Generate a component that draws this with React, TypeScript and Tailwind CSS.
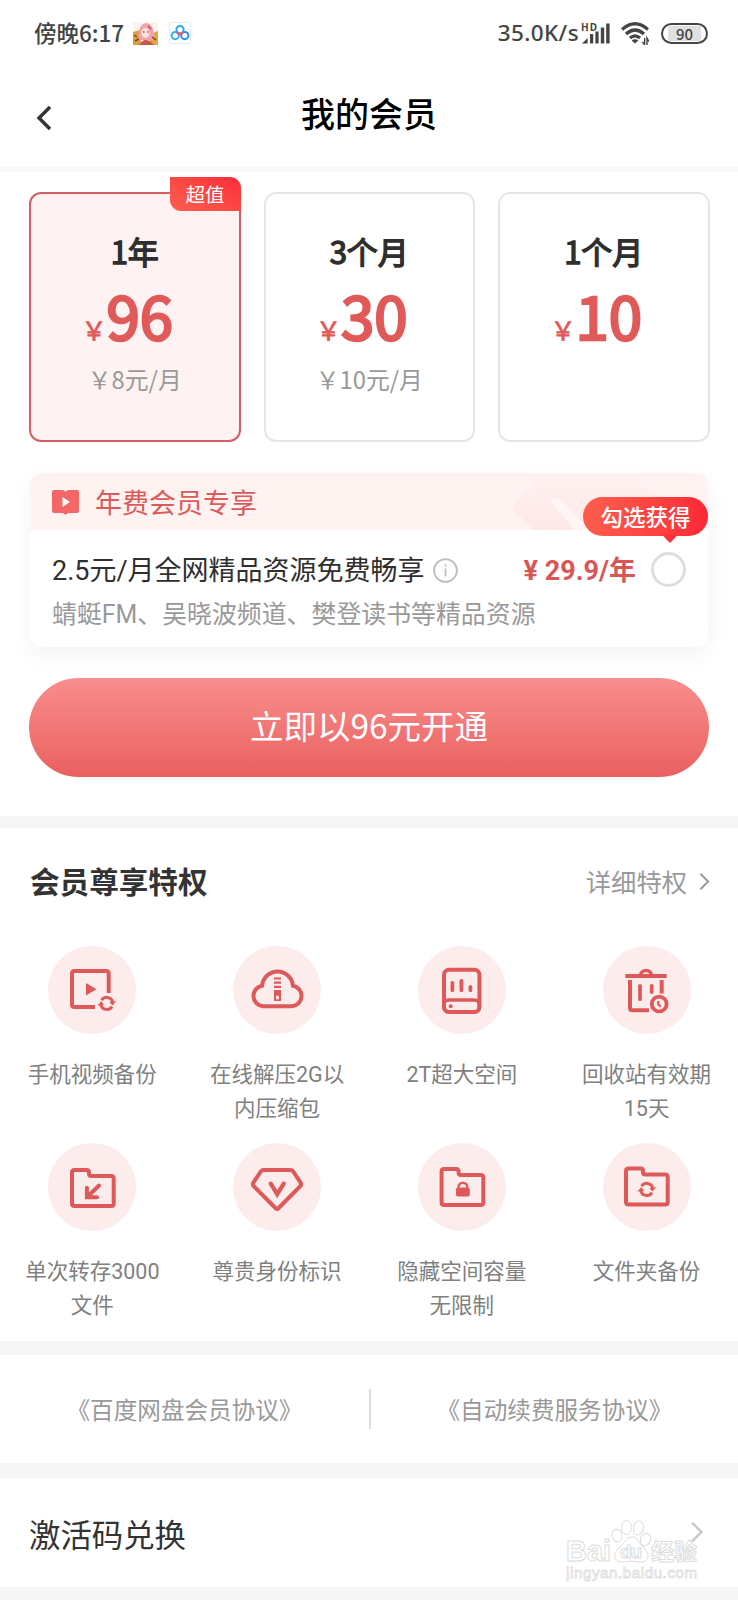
import React, { useState } from 'react';

type Plan = {
  id: string;
  title: string;
  price: string;
  monthly?: string;
  badge?: string;
};

const plans: Plan[] = [
  { id: 'year', title: '1年', price: '96', monthly: '￥8元/月', badge: '超值' },
  { id: 'quarter', title: '3个月', price: '30', monthly: '￥10元/月' },
  { id: 'month', title: '1个月', price: '10' },
];

const SyncMark: React.FC<{ x: number; y: number }> = ({ x, y }) => (
  <g transform={`translate(${x} ${y})`}>
    <path d="M-5.2 -3.2 A6.1 6.1 0 0 1 5.9 -1.4" fill="none" stroke="#de5a5a" strokeWidth="3" />
    <path d="M5.2 3.2 A6.1 6.1 0 0 1 -5.9 1.4" fill="none" stroke="#de5a5a" strokeWidth="3" />
    <path d="M9.4 -2.4 L5.8 2.2 L2.6 -1.2 Z" fill="#de5a5a" stroke="none" />
    <path d="M-9.4 2.4 L-5.8 -2.2 L-2.6 1.2 Z" fill="#de5a5a" stroke="none" />
  </g>
);

const Folder: React.FC<{ dx?: number; dy?: number }> = ({ dx = 0, dy = 0 }) => (
  <path
    transform={`translate(${dx} ${dy})`}
    d="M26.5 27 H38.5 Q41 27 41 29.5 V30.5 Q41 33 43.5 33 H63.2 Q65.7 33 65.7 35.5 V60.5 Q65.7 63 63.2 63 H26.5 Q24 63 24 60.5 V29.5 Q24 27 26.5 27 Z"
  />
);

const VideoIcon = () => (
  <>
    <path d="M60.7 47 V27.5 Q60.7 25 58.2 25 H26.5 Q24 25 24 27.5 V58.5 Q24 61 26.5 61 H47" />
    <path d="M38 37 V49.5 L48.5 43.2 Z" fill="#de5a5a" stroke="none" />
    <SyncMark x={58.8} y={57.4} />
  </>
);

const CloudZipIcon = () => (
  <>
    <path d="M30 60.3 A10.4 10.4 0 0 1 29 39.7 A15.6 16 0 0 1 60 39.7 A10.4 10.4 0 0 1 59 60.3 Z" />
    <path d="M41 32.5 H48 M41 36.7 H48 M41 40.9 H48" strokeWidth="2.2" />
    <path d="M41 44 H48 V55 H41 Z M43 49.7 V53.3 H46 V49.7 Z" fill="#de5a5a" fillRule="evenodd" stroke="none" />
  </>
);

const DiskIcon = () => (
  <>
    <rect x="26" y="23.7" width="35.4" height="42.4" rx="5" />
    <rect x="26" y="54" width="35.4" height="12.1" rx="5" strokeWidth="3.4" />
    <circle cx="32.7" cy="60.2" r="2" fill="#de5a5a" stroke="none" />
    <path d="M34.4 37 V44.2 M43.4 35 V44.2 M52.4 41 V44.2" strokeLinecap="round" strokeWidth="3.8" />
  </>
);

const TrashIcon = () => (
  <>
    <path d="M22.3 30 H63.7" />
    <path d="M37.5 29 A5.6 5.6 0 0 1 48.5 29" strokeWidth="3.6" />
    <path d="M27 34 V62 Q27 64.3 29.3 64.3 H46 M58.7 34 V47.5" />
    <path d="M37 39.8 V53.2 M48.7 39.8 V46" strokeLinecap="round" strokeWidth="3.8" />
    <circle cx="56.2" cy="58" r="7.4" strokeWidth="3.8" />
    <path d="M55.2 55 V58.2 L57.8 60.6" strokeWidth="2.2" />
  </>
);

const TransferIcon = () => (
  <>
    <Folder />
    <path d="M51 42.5 L39.5 53.7 M38.9 44.8 V54.2 H49" strokeLinecap="round" strokeWidth="4" />
  </>
);

const DiamondIcon = () => (
  <>
    <path d="M30.5 27 H57.5 Q59 27 60 28.2 L67.6 39.6 Q68.8 41.4 67.3 43.2 L45.6 65 Q44 66.6 42.4 65 L20.7 43.2 Q19.2 41.4 20.4 39.6 L28 28.2 Q29 27 30.5 27 Z" />
    <path d="M37.7 40.6 L44.2 51.2 L50.8 40.6" strokeLinecap="round" strokeWidth="4.2" />
  </>
);

const LockFolderIcon = () => (
  <>
    <Folder dx={-0.4} dy={-1} />
    <rect x="38" y="44.6" width="13.8" height="9" rx="1.8" fill="#de5a5a" stroke="none" />
    <path d="M40.6 46 V44 A4.3 4.3 0 0 1 49.2 44 V46" strokeWidth="2.4" />
  </>
);

const SyncFolderIcon = () => (
  <>
    <Folder dx={-1} dy={-1.4} />
    <SyncMark x={43.8} y={46.4} />
  </>
);

const privileges = [
  { lines: ['手机视频备份'], Icon: VideoIcon },
  { lines: ['在线解压2G以', '内压缩包'], Icon: CloudZipIcon },
  { lines: ['2T超大空间'], Icon: DiskIcon },
  { lines: ['回收站有效期', '15天'], Icon: TrashIcon },
  { lines: ['单次转存3000', '文件'], Icon: TransferIcon },
  { lines: ['尊贵身份标识'], Icon: DiamondIcon },
  { lines: ['隐藏空间容量', '无限制'], Icon: LockFolderIcon },
  { lines: ['文件夹备份'], Icon: SyncFolderIcon },
];

const StatusBar = () => (
  <div className="flex h-[66px] items-center pl-[34px] pr-[30px] font-medium text-[#444]">
    <span className="pb-px font-['Noto_Sans_CJK_SC',sans-serif] text-[22.5px]">傍晚6:17</span>
    <svg className="ml-[9px] h-6 w-[25px]" viewBox="0 0 25 24">
      <rect width="25" height="23" y="1" fill="#fbf3ec" />
      <path d="M0 11 L7 9 L8 24 H0 Z" fill="#d9a03c" />
      <path d="M17 13 L25 10 V24 H16 Z" fill="#e2a646" />
      <path d="M6 19 Q4 4 13 2 Q22 3 21 19 Z" fill="#eea3b0" />
      <ellipse cx="12.5" cy="12" rx="4" ry="5" fill="#fbe3dc" />
      <path d="M6 24 Q12 14 21 24 Z" fill="#c9564a" />
      <path d="M1 14 l3 2 M2 20 l4 -2 M19 16 l4 3" stroke="#8a3f22" strokeWidth="1.5" />
      <path d="M10 11 h1.5 M14 11 h1.5 M15 5 l3 3" stroke="#b04a62" strokeWidth="1.3" />
    </svg>
    <svg className="ml-[11px] h-[22px] w-[22px]" viewBox="0 0 22 22" fill="none">
      <rect x=".5" y=".5" width="21" height="21" rx="1.5" fill="#fff" stroke="#dcecf0" />
      <circle cx="6.2" cy="13.6" r="3.6" stroke="#2fb2ee" strokeWidth="2" />
      <circle cx="15.8" cy="13.6" r="3.6" stroke="#2c8fe8" strokeWidth="2" />
      <circle cx="11" cy="7.6" r="3.6" stroke="#35a6ea" strokeWidth="2" />
      <path d="M7.8 10.2 Q11 14.6 14.2 10.2" stroke="#ee5a70" strokeWidth="2.2" />
    </svg>
    <span className="ml-auto font-['Noto_Sans',sans-serif] text-[22.5px] tracking-[0.4px]">35.0K/s</span>
    <svg className="ml-[2px] h-6 w-[29px]" viewBox="0 0 29 24" fill="#444">
      <text x="0" y="9.5" fontFamily="Noto Sans" fontSize="10" fontWeight="700" textLength="16">HD</text>
      <path d="M1 22.5 L6.6 17 V22.5 Z M9 13 h3.2 v9.5 h-3.2 Z M14.4 10.5 h3.2 v12 H14.4 Z M19.8 6.5 h3.4 v16 h-3.4 Z M25.2 2.5 h3.4 v20 h-3.4 Z" />
    </svg>
    <svg className="ml-[11px] h-6 w-7" viewBox="0 0 28 24" fill="none" stroke="#444">
      <path d="M1 8.5 Q14 -3 27 8.5" strokeWidth="3.2" />
      <path d="M5 13 Q14 5 23 13" strokeWidth="3.2" />
      <path d="M9 17 Q14 12.6 19 17" strokeWidth="3.2" />
      <path d="M10.6 19.4 Q14 17 17.4 19.4 L14 22.4 Z" fill="#444" stroke="none" />
      <path d="M23.6 17 V24 L21.4 20.8 M26 24 V17 L28 20.6" strokeWidth="1.4" />
    </svg>
    <span className="ml-[12px] flex h-[21px] w-[47px] items-center rounded-full border-2 border-[#444] px-[5px]">
      <span className="flex h-[15px] w-full items-center justify-center bg-[#e0e0e0] font-['Noto_Sans_CJK_SC',sans-serif] text-[15px] leading-none font-medium">
        90
      </span>
    </span>
  </div>
);

const PlanCard: React.FC<{ plan: Plan; selected: boolean; onSelect: () => void }> = ({ plan, selected, onSelect }) => (
  <button
    onClick={onSelect}
    className={`relative flex h-[250px] flex-1 flex-col items-center rounded-[12px] border-2 pt-[35px] ${
      selected ? 'border-[#d35f62] bg-[#fef2f3]' : 'border-[#e6e6e6] bg-white'
    }`}
  >
    {plan.badge && (
      <span className="absolute -top-[17px] -right-[2px] flex h-[34px] w-[71px] items-center justify-center rounded-tr-[11px] rounded-bl-[11px] bg-linear-to-tr from-[#fb5d50] to-[#fd2a38] text-[19.5px] text-white">
        {plan.badge}
      </span>
    )}
    <span className="text-[31px] leading-[44px] text-[#2e2e2e] [-webkit-text-stroke:1.4px_currentColor]">{plan.title}</span>
    <span className="flex items-baseline pr-[15px] text-[#e05a5a]">
      <span className="text-[25px] leading-none [-webkit-text-stroke:0.8px_currentColor]">￥</span>
      <span className="text-[60px] leading-[81px] [-webkit-text-stroke:2.6px_currentColor]">{plan.price}</span>
    </span>
    {plan.monthly && <span className="mt-[8px] text-[23.8px] leading-[34px] text-[#999]">{plan.monthly}</span>}
  </button>
);

const ChevronRight: React.FC<{ className: string }> = ({ className }) => (
  <svg className={className} viewBox="0 0 12 20" fill="none" stroke="currentColor" strokeWidth="2.2">
    <path d="M1.5 1.5 L10 10 L1.5 18.5" />
  </svg>
);

const Watermark = () => (
  <div className="absolute right-[36px] bottom-[18px] h-[62px] w-[136px]">
    <svg viewBox="0 0 136 62" className="h-full w-full" fill="#fff" stroke="#dcdcdc" strokeWidth="1">
      <text x="0" y="41" fontFamily="Liberation Sans" fontSize="30" fontWeight="700" textLength="45" lengthAdjust="spacingAndGlyphs">Bai</text>
      <ellipse cx="51" cy="15.5" rx="5" ry="6.3" transform="rotate(-12 51 15.5)" />
      <ellipse cx="60.5" cy="7.5" rx="5" ry="7" />
      <ellipse cx="72.5" cy="8" rx="5" ry="7" transform="rotate(12 72.5 8)" />
      <ellipse cx="79.5" cy="19.5" rx="5" ry="6.3" transform="rotate(20 79.5 19.5)" />
      <path d="M66 17 C72 17 73 24 78 28 C85 34 82 43 74 42 Q66 40 58 42 C48 43 46 34 53 28 C58 24 60 17 66 17 Z" />
      <text x="54" y="38" fontFamily="Liberation Sans" fontSize="19" fontWeight="700" textLength="22">du</text>
      <text x="85" y="40" fontFamily="Noto Sans CJK SC" fontSize="23" fontWeight="700">经验</text>
      <text x="0" y="58" fontFamily="Liberation Sans" fontSize="15" strokeWidth="0.8" textLength="131">jingyan.baidu.com</text>
    </svg>
  </div>
);

const App: React.FC = () => {
  const [selected, setSelected] = useState('year');
  const [bundle, setBundle] = useState(false);
  const price = plans.find((p) => p.id === selected)?.price;

  return (
    <div className="relative h-[1600px] w-[738px] overflow-hidden bg-white font-['Noto_Sans_CJK_SC',sans-serif] text-[#333]">
      <StatusBar />

      <header className="flex h-[106px] items-center border-b-[5px] border-[#f8f8f8] px-[35px] pb-[8px]">
        <svg className="mt-[10px] h-[26px] w-4" viewBox="0 0 16 26" fill="none" stroke="#333" strokeWidth="3.4">
          <path d="M15 2 L4 13 L15 24" />
        </svg>
        <h1 className="flex-1 pr-4 pb-px text-center text-[34px] font-medium text-black">我的会员</h1>
      </header>

      <section className="flex gap-[23px] pr-[28.5px] pl-[29px] pt-[20px]">
        {plans.map((plan) => (
          <PlanCard key={plan.id} plan={plan} selected={selected === plan.id} onSelect={() => setSelected(plan.id)} />
        ))}
      </section>

      <section className="mx-[30px] mt-[31px] h-[174px] rounded-[12px] bg-white shadow-[0_8px_24px_rgba(0,0,0,0.05)]">
        <div className="relative flex h-[57px] items-center rounded-t-[12px] bg-[#fff3f2] pl-[22px] text-[#dc5a5a]">
          <svg className="h-[26px] w-[27px]" viewBox="0 0 27 26">
            <path d="M2 1 H10 Q12.5 1 13.5 3 Q14.5 1 17 1 H25 Q27 1 27 3 V22 Q27 24 25 24 H17 Q15 24 13.5 26 Q12 24 10 24 H2 Q0 24 0 22 V3 Q0 1 2 1 Z" fill="#f56767" />
            <path d="M10.5 8 L18 13 L10.5 18 Z" fill="#fff" />
          </svg>
          <span className="ml-[16px] pb-px text-[27px] leading-none">年费会员专享</span>
          <svg className="absolute top-0 right-0 h-[57px] w-[196px]" viewBox="0 0 196 57">
            <defs>
              <linearGradient id="ribbon" gradientUnits="userSpaceOnUse" x1="0" y1="0" x2="0" y2="57">
                <stop offset="0" stopColor="#fff2f1" />
                <stop offset="1" stopColor="#fee7e7" />
              </linearGradient>
            </defs>
            <path d="M20 12 Q28 1 40 0 H110 Q140 8 160 30 V57 H23 Q16 52 2 37 Q0 34 4 30 Z" fill="url(#ribbon)" />
            <path d="M38 27 Q44 23 50 28 L78 57 H62 Z" fill="#fff5f4" />
            <path d="M110 0 L160 30 V57 H196 V12 Q196 0 184 0 Z" fill="#fff3f2" />
          </svg>
          <div className="absolute top-[24px] right-0 flex h-[39px] w-[125px] items-center justify-center rounded-full bg-linear-to-r from-[#fd5d4c] to-[#fd2638] text-[22.5px] font-medium text-white">
            勾选获得
            <svg className="absolute top-[37px] right-[29px] h-[9px] w-[18px]" viewBox="0 0 18 9">
              <path d="M0 0 H18 Q15 2 13 5 L9 9 L5 5 Q3 2 0 0 Z" fill="#fd2f3c" />
            </svg>
          </div>
        </div>
        <div className="flex h-[80px] items-center pr-[22px] pl-[22px] font-[Roboto,'Noto_Sans_CJK_SC',sans-serif]">
          <span className="pt-[2px] text-[27px] whitespace-nowrap text-[#2f2f2f]">2.5元/月全网精品资源免费畅享</span>
          <svg className="ml-[8px] h-[25px] w-[25px]" viewBox="0 0 25 25" fill="none" stroke="#bdbdbd" strokeWidth="1.8">
            <circle cx="12.5" cy="12.5" r="11.4" />
            <path d="M12.5 6.2 V8.4 M12.5 10.4 V18.4" />
          </svg>
          <span className="ml-auto pt-[2px] text-[27px] font-bold whitespace-nowrap text-[#d95656]">¥ 29.9/年</span>
          <button
            onClick={() => setBundle(!bundle)}
            className={`mb-[2px] ml-[15px] h-[35px] w-[35px] rounded-full border-[3px] ${bundle ? 'border-[#de5a5a] bg-[#de5a5a]' : 'border-[#dedede]'}`}
          />
        </div>
        <p className="-mt-[13px] pl-[22px] font-[Roboto,'Noto_Sans_CJK_SC',sans-serif] text-[24.9px] leading-[36px] text-[#999]">
          蜻蜓FM、吴晓波频道、樊登读书等精品资源
        </p>
      </section>

      <button className="mx-[29px] mt-[31px] flex h-[99px] w-[680px] items-center justify-center rounded-full bg-linear-to-b from-[#f98d8d] to-[#e96060] pb-[4px] text-[33.5px] text-white">
        立即以{price}元开通
      </button>

      <div className="mt-[39px] h-[12px] bg-[#f6f6f6]" />

      <section className="h-[513px]">
        <div className="flex h-[109px] items-center justify-between pr-[28px] pb-[2px] pl-[30px]">
          <h2 className="pb-px text-[29.6px] font-bold text-[#333]">会员尊享特权</h2>
          <a className="flex items-center text-[25.3px] text-[#999]">
            详细特权
            <ChevronRight className="ml-[12px] h-[19px] w-[11px]" />
          </a>
        </div>
        <div className="grid w-[739px] grid-cols-4 pt-[9px]">
          {privileges.map(({ lines, Icon }) => (
            <div key={lines[0]} className="flex h-[197px] flex-col items-center">
              <span className="h-[88px] w-[88px] rounded-full bg-[#fcedec]">
                <svg viewBox="0 0 88 88" className="h-full w-full" fill="none" stroke="#de5a5a" strokeWidth="4">
                  <Icon />
                </svg>
              </span>
              <span className="mt-[24px] flex flex-col items-center font-[Roboto,'Noto_Sans_CJK_SC',sans-serif] text-[21.5px] leading-[33.5px] text-[#808080]">
                {lines.map((line) => (
                  <span key={line}>{line}</span>
                ))}
              </span>
            </div>
          ))}
        </div>
      </section>

      <div className="h-[14px] bg-[#f6f6f6]" />

      <section className="flex h-[108px] items-center text-center text-[23.6px] text-[#999]">
        <a className="w-[369px] pt-[2px]">《百度网盘会员协议》</a>
        <span className="h-[40px] w-[2px] bg-[#dcdcdc]" />
        <a className="flex-1 pt-[2px]">《自动续费服务协议》</a>
      </section>

      <div className="h-[15px] bg-[#f6f6f6]" />

      <section className="flex h-[109px] items-center justify-between pr-[34px] pl-[29px]">
        <span className="pt-[2px] text-[31.4px] text-[#333]">激活码兑换</span>
        <ChevronRight className="mb-[2px] h-[22px] w-[14px] text-[#c8c8c8]" />
      </section>

      <div className="h-[13px] bg-[#f6f6f6]" />
      <Watermark />
    </div>
  );
};

export default App;
